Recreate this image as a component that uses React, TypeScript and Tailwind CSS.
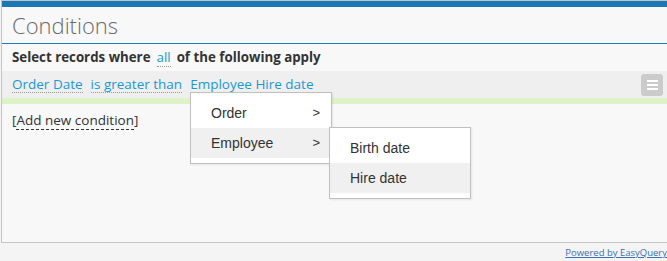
import { useState } from 'react';

const humanist = "font-['Open_Sans','DejaVu_Sans',sans-serif]";

function Link({ children }: { children: React.ReactNode }) {
  return (
    <span className="border-b border-dotted border-[#9a9a9a] leading-[15px] text-[#1a98d5]">{children}</span>
  );
}

export default function App() {
  const [active] = useState('Employee');

  return (
    <div className={`relative h-[261px] w-[667px] overflow-hidden bg-[#f4f4f4] pl-px ${humanist}`}>
      <div className="h-[243px] w-[680px] border border-[#c4c4c4] bg-[#f8f8f8]">
        <div className="h-[6px] bg-[#1b77b6]" />
        <div className="flex h-[37px] items-center border-b border-[#1e7bbb] px-[10px] text-[22px] font-light text-[#6b6b6b]">
          Conditions
        </div>
        <div className="flex h-[27px] items-center gap-[6px] px-[10px] text-[13.3px] font-bold text-[#333]">
          <span>Select records where</span>
          <span className="font-normal">
            <Link>all</Link>
          </span>
          <span>of the following apply</span>
        </div>
        <div className="flex h-[27px] items-center justify-between bg-[#efefef] pl-[10px] pr-[17px] text-[13.5px]">
          <div className="flex items-center gap-[8px]">
            <Link>Order Date</Link>
            <Link>is greater than</Link>
            <Link>Employee Hire date</Link>
          </div>
          <button className="flex h-[22px] w-[22px] flex-col items-center justify-center gap-[2px] rounded-[3px] bg-[#cbcbcb]">
            <span className="h-[2px] w-[11px] bg-white" />
            <span className="h-[2px] w-[11px] bg-white" />
            <span className="h-[2px] w-[11px] bg-white" />
          </button>
        </div>
        <div className="h-[6px] bg-[#ddf2c7]" />
        <div className="px-[10px] pt-[6px] text-[13.5px] text-[#333]">
          [<span className="border-b border-dashed border-[#333]">Add new condition</span>]
        </div>
      </div>
      <div className="flex justify-end pt-[3px]">
        <a className="text-[9.5px] text-[#3b6fb6] underline">Powered by EasyQuery</a>
      </div>

      <div className="absolute left-[190px] top-[92px] w-[142px] border border-[#c0c0c0] bg-white py-[5px] font-['Liberation_Sans',Arial,sans-serif] text-[14px] text-[#333] shadow-[1px_1px_2px_rgba(0,0,0,0.08)]">
        {['Order', 'Employee'].map((item) => (
          <div
            key={item}
            className={`flex h-[30px] items-center justify-between pl-[20px] pr-[11px] ${item === active ? 'bg-[#f0f0f0]' : ''}`}
          >
            <span>{item}</span>
            <span className="text-[13px]">&gt;</span>
          </div>
        ))}
      </div>

      <div className="absolute left-[329px] top-[127px] w-[142px] border border-[#c0c0c0] bg-white py-[5px] font-['Liberation_Sans',Arial,sans-serif] text-[14px] text-[#333] shadow-[1px_1px_2px_rgba(0,0,0,0.08)]">
        {['Birth date', 'Hire date'].map((item) => (
          <div
            key={item}
            className={`flex h-[30px] items-center pl-[20px] ${item === 'Hire date' ? 'bg-[#f0f0f0]' : ''}`}
          >
            {item}
          </div>
        ))}
      </div>
    </div>
  );
}
